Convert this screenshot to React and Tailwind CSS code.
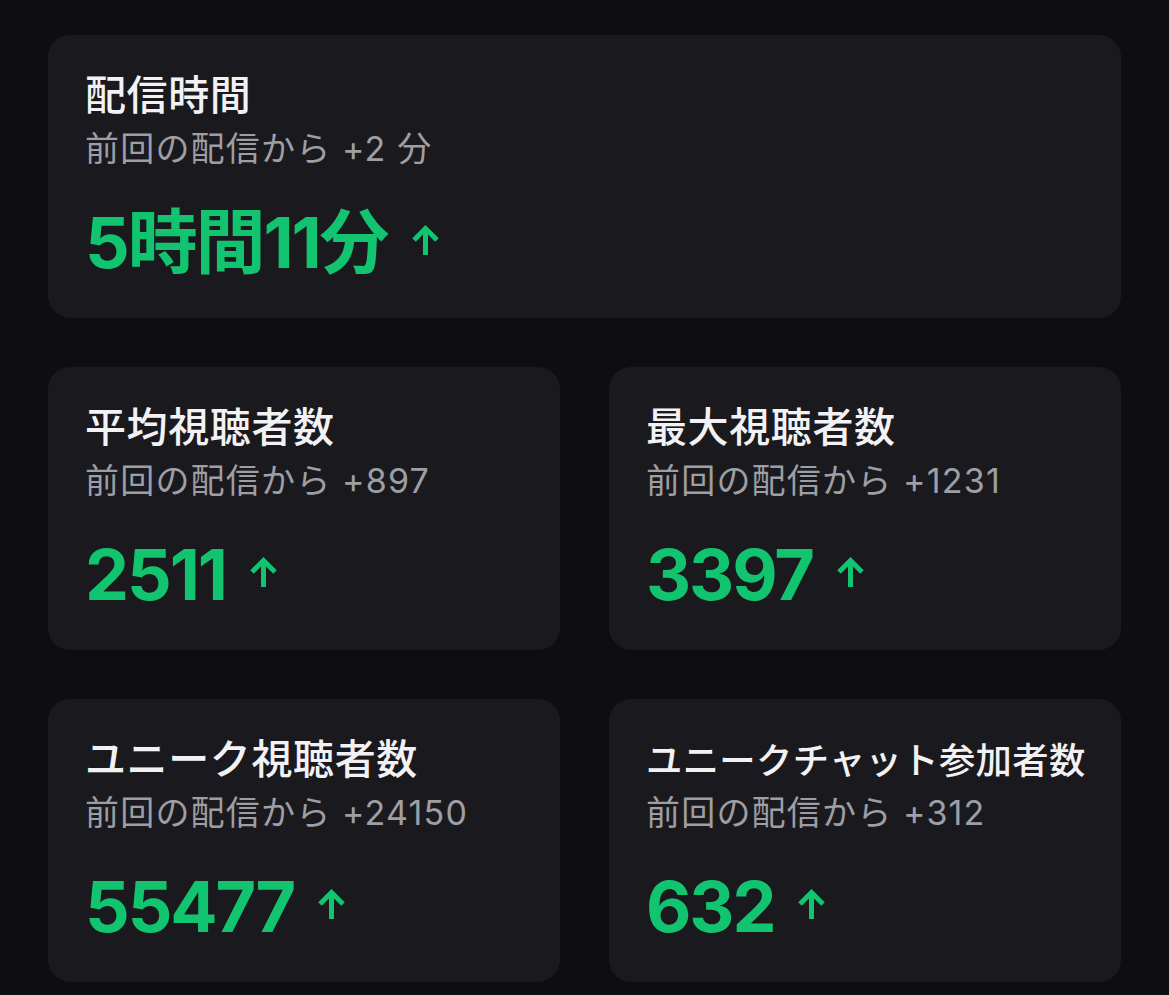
const font = { fontFamily: '"Inter", "Noto Sans CJK JP", sans-serif' };

function UpArrow() {
  return (
    <svg width="29" height="31" viewBox="0 0 29 31" fill="none" className="ml-[23px] -translate-y-[3px]">
      <path d="M14.5 30V4M3 15L14.5 3.5 26 15" stroke="#12c46f" strokeWidth="5" strokeLinecap="butt" strokeLinejoin="miter" />
    </svg>
  );
}

function StatCard({ title, diff, value, small }) {
  return (
    <div className="h-[283px] rounded-[22px] bg-[#1a1a1e] px-[37px] pt-[36px]">
      <div
        className={
          small
            ? 'h-[48px] whitespace-nowrap text-[36.3px] leading-[52px] font-medium text-[#f2f2f4] tracking-[0.01em]'
            : 'h-[48px] whitespace-nowrap text-[41px] leading-[48px] font-medium text-[#f2f2f4] tracking-[0.015em]'
        }
      >
        {title}
      </div>
      <div className="mt-[10px] text-[34px] leading-[40px] text-[#9e9ea5] tracking-[0.035em]">{diff}</div>
      <div className="mt-[39px] flex items-center">
        <span className="text-[70px] leading-none font-bold text-[#12c46f] tracking-[-0.03em]">{value}</span>
        <UpArrow />
      </div>
    </div>
  );
}

export default function App() {
  return (
    <div className="min-h-[995px] bg-[#0e0e10] px-[48px] pt-[35px] pb-[13px]" style={font}>
      <StatCard title="配信時間" diff="前回の配信から +2 分" value="5時間11分" />
      <div className="mt-[49px] grid grid-cols-2 gap-x-[49px] gap-y-[49px]">
        <StatCard title="平均視聴者数" diff="前回の配信から +897" value="2511" />
        <StatCard title="最大視聴者数" diff="前回の配信から +1231" value="3397" />
        <StatCard title="ユニーク視聴者数" diff="前回の配信から +24150" value="55477" />
        <StatCard title="ユニークチャット参加者数" diff="前回の配信から +312" value="632" small />
      </div>
    </div>
  );
}
